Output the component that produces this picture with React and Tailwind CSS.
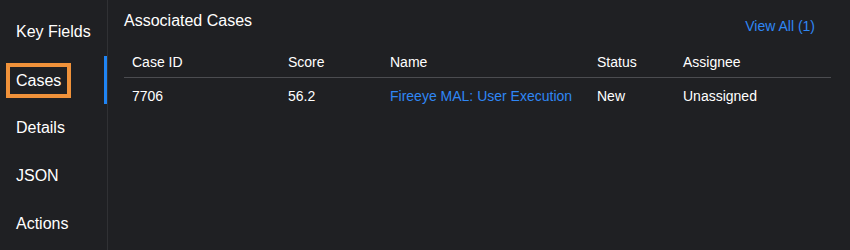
import React from 'react'

const navItems = ['Key Fields', 'Cases', 'Details', 'JSON', 'Actions']

const cols = [
  { label: 'Case ID', w: 'w-[156px]' },
  { label: 'Score', w: 'w-[102px]' },
  { label: 'Name', w: 'w-[207px]' },
  { label: 'Status', w: 'w-[86px]' },
  { label: 'Assignee', w: 'flex-1' },
]

export default function App() {
  return (
    <div className="flex h-[250px] w-[850px] bg-[#1f2023] font-['Liberation_Sans',Arial,sans-serif] text-white">
      <nav className="flex w-[108px] flex-col border-r border-[#303134] pt-[8px]">
        {navItems.map((item) => (
          <div key={item} className="relative flex h-[48px] items-center pl-[16px] text-[16px]">
            {item === 'Cases' ? (
              <span className="-ml-[10px] border-[4px] border-[#f0923a] px-[6px] py-[4px] leading-[19px]">{item}</span>
            ) : (
              item
            )}
            {item === 'Cases' && (
              <span className="absolute right-0 top-0 h-[48px] w-[3px] bg-[#1f84f4]" />
            )}
          </div>
        ))}
      </nav>

      <main className="flex-1 pl-[16px] pr-[19px] pt-[12px]">
        <div className="flex h-[18px] items-start justify-between">
          <h2 className="text-[16px] leading-[18px]">Associated Cases</h2>
          <a className="mr-[16px] mt-[6px] text-[14px] leading-[16px] text-[#2f87f5]">View All (1)</a>
        </div>

        <div className="mt-[24px] flex border-b border-[#4b4c50] pb-[7px] pl-[8px] text-[14px] leading-[16px]">
          {cols.map((c) => (
            <div key={c.label} className={c.w}>{c.label}</div>
          ))}
        </div>

        <div className="flex pl-[8px] pt-[10px] text-[14px] leading-[16px]">
          <div className="w-[156px]">7706</div>
          <div className="w-[102px]">56.2</div>
          <div className="w-[207px] text-[#2f87f5]">Fireeye MAL: User Execution</div>
          <div className="w-[86px]">New</div>
          <div className="flex-1">Unassigned</div>
        </div>
      </main>
    </div>
  )
}
